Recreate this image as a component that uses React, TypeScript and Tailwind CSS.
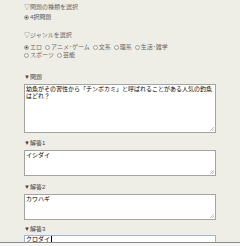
const font = { fontFamily: '"Liberation Sans", "Noto Sans CJK JP", sans-serif' };

function Radio({ checked = false }: { checked?: boolean }) {
  return (
    <span className="relative mr-[1px] inline-block h-[5px] w-[5px] rounded-full border border-[#9c9c9c] bg-[#f4f4f4] align-[-0.5px]">
      {checked && <span className="absolute left-[1px] top-[1px] h-[1px] w-[1px] rounded-full bg-[#333] shadow-[0_0_0_0.5px_#333]" />}
    </span>
  );
}

function Option({ label, checked }: { label: string; checked?: boolean }) {
  return (
    <span className="mr-[3px] inline-flex items-center">
      <Radio checked={checked} />
      <span>{label}</span>
    </span>
  );
}

function Box({ text, height, focused, top = "mt-[3px]" }: { text: string; height: string; focused?: boolean; top?: string }) {
  return (
    <div
      className={`relative ${top} w-[192px] ${height} border bg-white px-[1px] text-[6px] leading-[7px] text-black ${
        focused ? "border-[#9fb6cf] pt-0" : "border-[#a3a3a3] py-[1px]"
      }`}
    >
      {text}
      {focused && <span className="ml-[0.5px] inline-block h-[6px] w-[1px] bg-black align-[-1px]" />}
      {!focused && (
        <svg className="absolute bottom-[1px] right-[1px]" width="4" height="4" viewBox="0 0 4 4">
          <path d="M4 0L0 4M4 2L2 4" stroke="#999" strokeWidth="0.6" />
        </svg>
      )}
    </div>
  );
}

export default function App() {
  return (
    <div className="h-[246px] w-[240px] overflow-hidden bg-[#eeede6]" style={font}>
      <div className="h-[242px] overflow-hidden px-[24px] pt-[4px] text-[6px] leading-[7px]">
        {/* quiz type */}
        <div className="text-[#666]">▽問題の種類を選択</div>
        <div className="mt-[3px] text-[#555]">
          <Option label="4択問題" checked />
        </div>

        {/* genre */}
        <div className="mt-[10px] text-[#666]">▽ジャンルを選択</div>
        <div className="mt-[5px] text-[#666]">
          <div>
            <Option label="エロ" checked />
            <Option label="アニメ･ゲーム" />
            <Option label="文系" />
            <Option label="理系" />
            <Option label="生活･雑学" />
          </div>
          <div>
            <Option label="スポーツ" />
            <Option label="芸能" />
          </div>
        </div>

        {/* question */}
        <div className="mt-[14px] text-[#444]">▼問題</div>
        <Box height="h-[49px]" text="幼魚がその習性から「チンボカミ」と呼ばれることがある人気の釣魚はどれ？" />

        <div className="mt-[7px] text-[#444]">▼解答1</div>
        <Box height="h-[26px]" text="イシダイ" />

        <div className="mt-[8px] text-[#444]">▼解答2</div>
        <Box height="h-[26px]" text="カワハギ" />

        <div className="mt-[6px] text-[#444]">▼解答3</div>
        <Box height="h-[26px]" text="クロダイ" focused top="mt-[2px]" />
      </div>
      <div className="h-[4px] border-t border-[#8a8a8a] bg-[#f6f6f6]" />
    </div>
  );
}
